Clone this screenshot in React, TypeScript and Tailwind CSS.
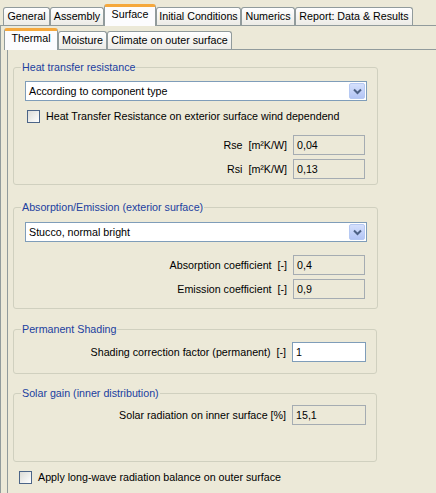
import React from 'react';

const outerTabs = [
  { label: 'General', w: 'w-[47px]' },
  { label: 'Assembly', w: 'w-[54px]' },
  { label: 'Surface', w: 'w-[52px]', active: true },
  { label: 'Initial Conditions', w: 'w-[85px]' },
  { label: 'Numerics', w: 'w-[54px]' },
  { label: 'Report: Data & Results', w: 'w-[118px]' },
];

const innerTabs = [
  { label: 'Thermal', w: 'w-[54px]', active: true },
  { label: 'Moisture', w: 'w-[49px]' },
  { label: 'Climate on outer surface', w: 'w-[125px]' },
];

function Tab({ label, w, active }: { label: string; w: string; active?: boolean }) {
  if (active) {
    return (
      <div
        className={`${w} relative z-10 -mb-px h-[22px] shrink-0 rounded-t-[3px] border-x border-t-[3px] border-x-[#919b9c] border-t-[#f5a83c] bg-[#fcfcfe] text-center leading-[15px]`}
      >
        {label}
      </div>
    );
  }
  return (
    <div
      className={`${w} h-[18px] shrink-0 rounded-t-[3px] border-x border-t border-[#919b9c] bg-gradient-to-b from-white to-[#ecebe6] text-center leading-[16px]`}
    >
      {label}
    </div>
  );
}

function Combo({ value }: { value: string }) {
  return (
    <div className="flex h-[20px] w-[342px] items-center border border-[#7f9db9] bg-white pl-[3px]">
      <span className="flex-1">{value}</span>
      <div className="mr-px flex h-[16px] w-[16px] items-center justify-center rounded-[2px] border border-[#b6c9f3] bg-gradient-to-b from-[#d5e0fc] to-[#b3c5f5]">
        <svg width="9" height="7" viewBox="0 0 9 7">
          <path d="M1 1.5 L4.5 5 L8 1.5" fill="none" stroke="#4d6185" strokeWidth="2" />
        </svg>
      </div>
    </div>
  );
}

function Field({ label, value, disabled = true, wide }: { label: string; value: string; disabled?: boolean; wide?: boolean }) {
  return (
    <div className="flex items-center">
      <span className="flex-1 whitespace-pre pr-[6px] text-right">{label}</span>
      <div
        className={`${wide ? 'w-[74px]' : 'w-[72px] mr-[2px]'} h-[20px] border pl-[3px] leading-[18px] ${
          disabled ? 'border-[#a5acb2] bg-[#ece9d8]' : 'border-[#7f9db9] bg-white'
        }`}
      >
        {value}
      </div>
    </div>
  );
}

function Check({ label }: { label: string }) {
  return (
    <div className="flex h-[13px] items-center">
      <div className="h-[13px] w-[13px] border border-[#4c6588] bg-gradient-to-br from-[#dcdcd7] to-white" />
      <span className="ml-[6px]">{label}</span>
    </div>
  );
}

function Group({ title, className, children }: { title: string; className?: string; children: React.ReactNode }) {
  return (
    <fieldset className={`w-[364px] rounded-[3px] border border-[#d0d0bf] ${className ?? ''}`}>
      <legend className="ml-[7px] px-[1px] leading-[13px] text-[#21409f]">{title}</legend>
      <div className="pl-[11px] pr-[10px]">{children}</div>
    </fieldset>
  );
}

export default function App() {
  return (
    <div
      className="h-[493px] w-[436px] overflow-hidden bg-[#ece9d8] text-[10.7px] leading-[13px] text-black"
      style={{ fontFamily: '"Liberation Sans", Arial, sans-serif' }}
    >
      {/* outer tabs */}
      <div className="flex h-[25px] items-end pl-[3px]">
        {outerTabs.map((t) => (
          <Tab key={t.label} {...t} />
        ))}
      </div>

      <div className="h-[468px] border-l border-t border-[#919b9c] pl-[3px] pt-[3px]">
        {/* inner tabs */}
        <div className="flex h-[20px] items-end">
          {innerTabs.map((t) => (
            <Tab key={t.label} {...t} />
          ))}
        </div>

        <div className="ml-[3px] h-[450px] border-l border-t border-[#919b9c] pl-[5px]">
          <Group title="Heat transfer resistance" className="mt-[11px] pb-[5px]">
            <div className="mt-[7px]">
              <Combo value="According to component type" />
            </div>
            <div className="ml-[2px] mt-[9px]">
              <Check label="Heat Transfer Resistance on exterior surface wind dependend" />
            </div>
            <div className="mt-[12px]">
              <Field label="Rse  [m²K/W]" value="0,04" />
            </div>
            <div className="mt-[4px]">
              <Field label="Rsi  [m²K/W]" value="0,13" />
            </div>
          </Group>

          <Group title="Absorption/Emission (exterior surface)" className="mt-[16px] pb-[9px]">
            <div className="mt-[8px]">
              <Combo value="Stucco, normal bright" />
            </div>
            <div className="mt-[13px]">
              <Field label="Absorption coefficient  [-]" value="0,4" />
            </div>
            <div className="mt-[4px]">
              <Field label="Emission coefficient  [-]" value="0,9" />
            </div>
          </Group>

          <Group title="Permanent Shading" className="mt-[14px] pb-[11px]">
            <div className="mt-[6px]">
              <Field label="Shading correction factor (permanent)  [-]" value="1" disabled={false} wide />
            </div>
          </Group>

          <Group title="Solar gain (inner distribution)" className="mt-[13px] pb-[36px]">
            <div className="mt-[5px]">
              <Field label="Solar radiation on inner surface [%]" value="15,1" wide />
            </div>
          </Group>

          <div className="ml-[6px] mt-[9px]">
            <Check label="Apply long-wave radiation balance on outer surface" />
          </div>
        </div>
      </div>
    </div>
  );
}
